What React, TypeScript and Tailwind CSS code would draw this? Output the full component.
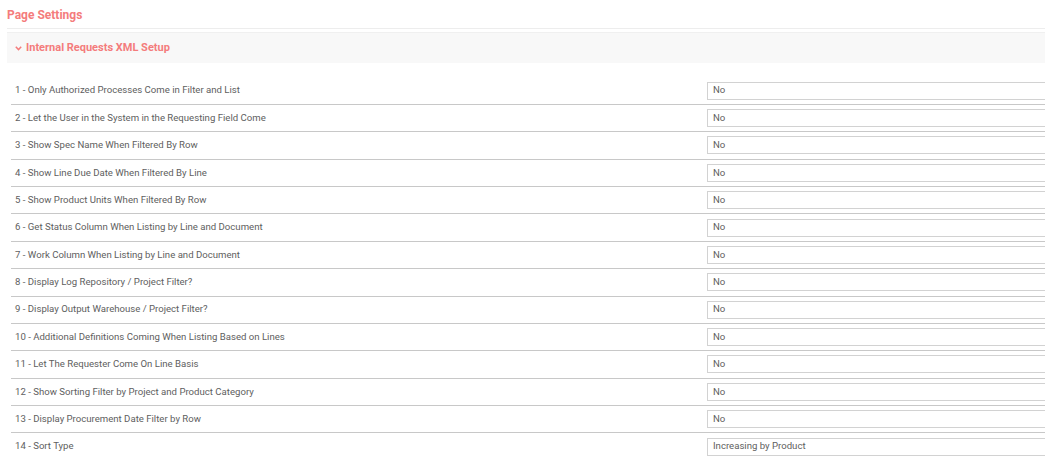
import React from "react";

const rows: [string, string][] = [
  ["1 - Only Authorized Processes Come in Filter and List", "No"],
  ["2 - Let the User in the System in the Requesting Field Come", "No"],
  ["3 - Show Spec Name When Filtered By Row", "No"],
  ["4 - Show Line Due Date When Filtered By Line", "No"],
  ["5 - Show Product Units When Filtered By Row", "No"],
  ["6 - Get Status Column When Listing by Line and Document", "No"],
  ["7 - Work Column When Listing by Line and Document", "No"],
  ["8 - Display Log Repository / Project Filter?", "No"],
  ["9 - Display Output Warehouse / Project Filter?", "No"],
  ["10 - Additional Definitions Coming When Listing Based on Lines", "No"],
  ["11 - Let The Requester Come On Line Basis", "No"],
  ["12 - Show Sorting Filter by Project and Product Category", "No"],
  ["13 - Display Procurement Date Filter by Row", "No"],
  ["14 - Sort Type", "Increasing by Product"],
];

export default function App() {
  return (
    <div
      className="w-[1045px] h-[456px] overflow-hidden bg-white pl-[7px]"
      style={{ fontFamily: "Roboto, 'Liberation Sans', sans-serif" }}
    >
      <div className="h-[29px] border-b border-[#ededed] flex items-center">
        <span className="text-[12px] font-bold text-[#f47c7c] leading-none pt-[2px]">Page Settings</span>
      </div>
      <div className="mt-[3px] h-[31px] bg-[#f8f8f8] border-t border-[#f0f0f0] flex items-center pl-[8px]">
        <svg width="7" height="5" viewBox="0 0 7 5" className="mr-[4px] mt-[1px]">
          <path d="M0.8 0.8 L3.5 3.6 L6.2 0.8" fill="none" stroke="#f47c7c" strokeWidth="1.5" />
        </svg>
        <span className="text-[11px] font-bold text-[#f47c7c]">Internal Requests XML Setup</span>
      </div>
      <div className="mt-[14.5px] pl-[4px]">
        {rows.map(([label, value], i) => (
          <div
            key={i}
            className={`flex items-center py-[4.2px] ${i < rows.length - 1 ? "border-b border-[#c8c8c8]" : ""}`}
          >
            <div className="w-[696px] pl-[4px] text-[9.6px] text-[#606060]">{label}</div>
            <div className="flex-1 -mr-[10px] h-[18px] border border-[#d2d2d2] flex items-center pl-[5px] text-[9.6px] text-[#606060]">
              {value}
            </div>
          </div>
        ))}
      </div>
    </div>
  );
}
